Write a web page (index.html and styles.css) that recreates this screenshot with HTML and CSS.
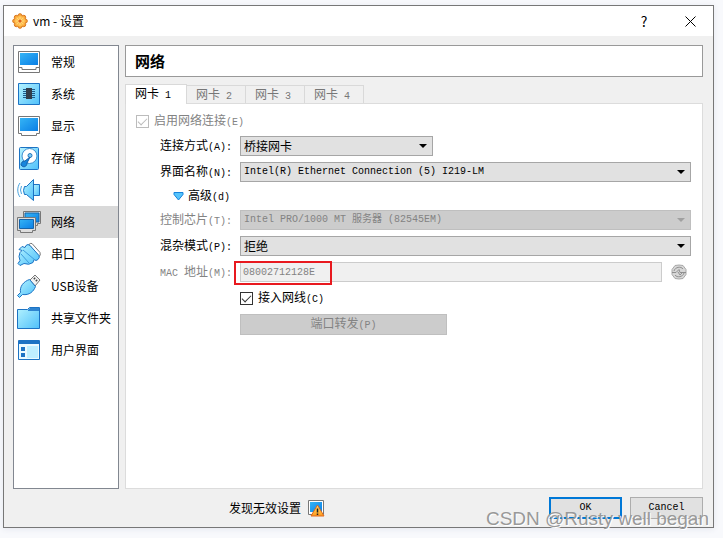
FILE: index.html
```
<!DOCTYPE html>
<html lang="zh-CN">
<head>
    <meta charset="UTF-8">
    <meta name="viewport" content="width=device-width, initial-scale=1.0">
    <title>vm - 设置</title>
    <link rel="stylesheet" href="styles.css">
</head>
<body>
    <!-- gradients shared by the icons -->
    <svg class="defs" width="0" height="0" aria-hidden="true">
        <defs>
            <linearGradient id="screen" x1="0" y1="0" x2="1" y2="1">
                <stop offset="0" stop-color="#35b4f5"/>
                <stop offset="1" stop-color="#0a7fe6"/>
            </linearGradient>
            <linearGradient id="light" x1="0" y1="0" x2="1" y2="1">
                <stop offset="0" stop-color="#b5f3ff"/>
                <stop offset="1" stop-color="#4fc0fa"/>
            </linearGradient>
            <linearGradient id="warn" x1="0" y1="0" x2="0" y2="1">
                <stop offset="0" stop-color="#ffe070"/>
                <stop offset="1" stop-color="#ff9a1c"/>
            </linearGradient>
        </defs>
    </svg>

    <div class="window">
        <header class="titlebar">
            <svg class="app-icon" width="16" height="16" viewBox="0 0 16 16">
                <g fill="#f9a63a" stroke="#d9761a">
                    <circle cx="8" cy="2.7" r="2"/><circle cx="11.7" cy="4.3" r="2"/>
                    <circle cx="13.3" cy="8" r="2"/><circle cx="11.7" cy="11.7" r="2"/>
                    <circle cx="8" cy="13.3" r="2"/><circle cx="4.3" cy="11.7" r="2"/>
                    <circle cx="2.7" cy="8" r="2"/><circle cx="4.3" cy="4.3" r="2"/>
                </g>
                <circle cx="8" cy="8" r="5.3" fill="#ffbd4f"/>
                <path d="M8 4v8M4 8h8M5.2 5.2l5.6 5.6M10.8 5.2l-5.6 5.6" stroke="#ffdb80"/>
                <circle cx="8" cy="8" r="1.6" fill="#e0601c"/>
            </svg>
            <h1>vm - 设置</h1>
            <button type="button" class="win-btn" aria-label="帮助">?</button>
            <button type="button" class="win-btn" aria-label="关闭">
                <svg width="11" height="11" viewBox="0 0 11 11"><path d="M.5.5l10 10M10.5.5l-10 10" stroke="#000" fill="none"/></svg>
            </button>
        </header>

        <div class="content">
            <nav class="sidebar">
                <a href="#general">
                    <svg width="24" height="24" viewBox="0 0 24 24"><path d="M1.5 1.5h21v21h-21z" fill="#fff" stroke="#777"/><path d="M3 3h18v12H3z" fill="url(#screen)"/><path d="M2 17.5h3v2h14v-2h3" fill="none" stroke="#777"/></svg>
                    常规
                </a>
                <a href="#system">
                    <svg width="24" height="24" viewBox="0 0 24 24"><path d="M1.5 1.5h21v21h-21z" fill="url(#light)" stroke="#1c73c4"/><path d="M6 7.5h12M6 9.5h12M6 11.5h12M6 13.5h12M6 15.5h12" stroke="#1f5c8c"/><path d="M9 6h6v11H9z" fill="#333d4a"/></svg>
                    系统
                </a>
                <a href="#display">
                    <svg width="24" height="24" viewBox="0 0 24 24"><path d="M1.5 2.5h21v17h-3v2h-15v-2h-3z" fill="#fff" stroke="#777"/><path d="M3 4h18v13H3z" fill="url(#screen)"/></svg>
                    显示
                </a>
                <a href="#storage">
                    <svg width="24" height="24" viewBox="0 0 24 24"><rect x="2.5" y="1.5" width="19" height="22" rx="1" fill="url(#light)" stroke="#1c73c4"/><circle cx="12.5" cy="10" r="7.5" fill="#fff" stroke="#3c8fd0"/><circle cx="13" cy="9.5" r="2" fill="#7ccdf5" stroke="#2476bd"/><path d="M13 11l-5 4c-3 0-4 2-4 4 2 3 6 2 6-2z" fill="#1786dd" stroke="#125faa"/></svg>
                    存储
                </a>
                <a href="#audio">
                    <svg width="24" height="24" viewBox="0 0 24 24"><path d="M16.5 6.500h6v11h-6z" fill="url(#light)" stroke="#1c73c4"/><path d="M7.500 8.500h2l7-7v21l-7-6h-2q-2-4 0-8z" fill="url(#light)" stroke="#1c73c4"/><path d="M4.500 8q-2 4 0 8M3 5c-3 4-3 10 0 14" fill="none" stroke="#48a3df"/></svg>
                    声音
                </a>
                <a href="#network" class="selected">
                    <svg width="24" height="24" viewBox="0 0 24 24"><path d="M6.500 1.500h17v12h-3v2h-11v-2h-3z" fill="#ddd" stroke="#777"/><path d="M8 3h14v9H8z" fill="url(#screen)" stroke="#1764a8"/><path d="M.5 7.500h18v13h-3v2h-12v-2h-3z" fill="#ddd" stroke="#777"/><path d="M2.500 9.500h14v9h-14z" fill="url(#screen)" stroke="#1764a8"/></svg>
                    网络
                </a>
                <a href="#serial">
                    <svg width="24" height="24" viewBox="0 0 24 24"><path d="M12 2.500q1-1.500 3-1l8 9q1 3-1 4z" fill="#fff" stroke="#777"/><path d="M9 3.500q2-2 4 0l9 10q1 2-1 4l-2 1-2-1-1 3q-4 3-9 1l-4 2-2-2 2-3q-2-4 0-8l2-2-3-1 3-3 3 1z" fill="url(#light)" stroke="#1c73c4"/><path d="M6 8l12 10M4 12l8 9" stroke="#3c9bdd" fill="none"/></svg>
                    串口
                </a>
                <a href="#usb">
                    <svg width="24" height="24" viewBox="0 0 24 24"><path d="M13 6l5-5 5 5-5 6z" fill="#f2f2f2" stroke="#777"/><path d="M17 4l1 1M19 6l1 1" stroke="#444" stroke-width="2"/><path d="M12.500 5.500l6 7c-2 5-6 9-13 8l-3 3-2-2 3-3c-1-6 3-11 9-13z" fill="url(#light)" stroke="#1c73c4"/></svg>
                    USB设备
                </a>
                <a href="#shared">
                    <svg width="24" height="24" viewBox="0 0 24 24"><path d="M.5 22.500v-19h10l2-2h10v21z" fill="url(#light)" stroke="#1c73c4"/><path d="M11 4l2-2h9v3H11z" fill="#2f84d0"/></svg>
                    共享文件夹
                </a>
                <a href="#ui">
                    <svg width="24" height="24" viewBox="0 0 24 24"><path d="M1.500 2.500h21v19h-21z" fill="#eafaff" stroke="#1c73c4"/><path d="M2 3h20v3H2z" fill="#1c73c4"/><path d="M4 9h4v4H4zM4 15h4v4H4z" fill="#1c73c4"/><path d="M10 8h11v12H10z" fill="#bfefff"/></svg>
                    用户界面
                </a>
            </nav>

            <main>
                <h2>网络</h2>
                <div class="tabs" role="tablist">
                    <button type="button" role="tab" class="active" aria-selected="true">网卡<span class="en"> 1</span></button>
                    <button type="button" role="tab">网卡<span class="en"> 2</span></button>
                    <button type="button" role="tab">网卡<span class="en"> 3</span></button>
                    <button type="button" role="tab">网卡<span class="en"> 4</span></button>
                </div>
                <form class="panel" id="settings">
                    <label class="check disabled">
                        <input type="checkbox" checked disabled>
                        <span>启用网络连接<span class="en">(E)</span></span>
                    </label>

                    <div class="fields">
                        <label for="attached">连接方式<span class="en">(A):</span></label>
                        <div class="select short">
                            <select id="attached"><option>桥接网卡</option></select>
                        </div>

                        <label for="adapter">界面名称<span class="en">(N):</span></label>
                        <div class="select">
                            <select id="adapter" class="en"><option>Intel(R) Ethernet Connection (5) I219-LM</option></select>
                        </div>

                        <button type="button" class="advanced">
                            <svg width="11" height="9" viewBox="0 0 11 9"><path d="M1 .5h9v2l-4.500 5.500-4.500-5.500z" fill="#56c4fb" stroke="#1583dc"/></svg>
                            <span>高级<span class="en">(d)</span></span>
                        </button>

                        <label for="chip" class="disabled">控制芯片<span class="en">(T):</span></label>
                        <div class="select disabled">
                            <select id="chip" class="en" disabled><option>Intel PRO/1000 MT 服务器 (82545EM)</option></select>
                        </div>

                        <label for="promisc">混杂模式<span class="en">(P):</span></label>
                        <div class="select">
                            <select id="promisc"><option>拒绝</option></select>
                        </div>

                        <label for="mac" class="disabled"><span class="en">MAC </span>地址<span class="en">(M):</span></label>
                        <div class="mac">
                            <input type="text" id="mac" class="en" value="08002712128E" disabled>
                            <button type="button" aria-label="刷新" disabled>
                                <svg width="16" height="16" viewBox="0 0 16 16"><path d="M4 1.500q4-1 8 0l3 4v5l-3 4q-4 1-8 0l-3-4v-5z" fill="#d6d6d6" stroke="#a8a8a8"/><path d="M3 7c1-4 7-5 9-2M13 9c-1 4-7 5-9 2" fill="none" stroke="#8f8f8f"/><path d="M1 8.500h4l3-3 1 3h6M7 8l2 3 2-2" fill="none" stroke="#8f8f8f"/></svg>
                            </button>
                        </div>

                        <label class="check cable">
                            <input type="checkbox" checked>
                            <span>接入网线<span class="en">(C)</span></span>
                        </label>

                        <button type="button" class="forward" disabled>端口转发<span class="en">(P)</span></button>
                    </div>
                </form>
            </main>
        </div>

        <footer>
            <div class="status">
                发现无效设置
                <svg width="17" height="17" viewBox="0 0 17 17"><path d="M.5.5h15v14H.5z" fill="#fff" stroke="#777"/><path d="M2 2h12v10H2z" fill="url(#screen)"/><path d="M9.500 5l6.500 11H3z" fill="url(#warn)" stroke="#e0681a"/><path d="M9.500 8.500v4M9.500 13.500v1.500" stroke="#222" stroke-width="1.500"/></svg>
            </div>
            <button type="submit" form="settings" class="btn primary en">OK</button>
            <button type="button" class="btn en">Cancel</button>
        </footer>
        <div class="watermark">CSDN @Rusty well began</div>
    </div>
</body>
</html>
```
FILE: styles.css
```
*, *::before, *::after {
    box-sizing: border-box;
}
body {
    display: flex;
    min-height: 100vh;
    margin: 0;
    padding: 5px 9px 10px 3px;
    background-color: #f8f9fc;
    color: #000;
    font-family: "Noto Sans CJK SC", sans-serif;
    font-size: 12px;
    line-height: 16px;
}
.defs {
    position: absolute;
}
svg {
    flex: none;
}
button, input, select {
    margin: 0;
    padding: 0;
    font: inherit;
    color: inherit;
}
/* narrow latin characters next to the chinese labels */
.en {
    font-family: "Liberation Mono", "Noto Sans CJK SC", monospace;
    font-size: 10px;
    white-space: pre;
}

.window {
    position: relative;
    flex: 1;
    display: flex;
    flex-direction: column;
    border: 1px solid #777;
    background-color: #f0f0f0;
    box-shadow: 0 1px 6px #e4e6ee;
}
.titlebar {
    display: flex;
    align-items: center;
    height: 30px;
    padding-left: 8px;
    background-color: #fff;
}
h1 {
    flex: 1;
    margin: 0 0 0 5px;
    font-size: 12px;
    font-weight: normal;
}
.win-btn {
    width: 46px;
    height: 30px;
    border: none;
    background: none;
    font-size: 14px;
}

.content {
    flex: 1;
    display: flex;
    gap: 6px;
    padding: 9px 10px 0 9px;
}
.sidebar {
    width: 106px;
    border: 1px solid #828790;
    background-color: #fff;
}
.sidebar a {
    display: flex;
    align-items: center;
    gap: 10px;
    height: 32px;
    padding-left: 3px;
    color: #000;
    text-decoration: none;
    white-space: nowrap;
}
.sidebar a.selected {
    background-color: #d9d9d9;
}

main {
    flex: 1;
    display: flex;
    flex-direction: column;
}
h2 {
    height: 32px;
    margin: 0 0 7px;
    padding-left: 9px;
    border: 1px solid #999;
    background-color: #fff;
    font-size: 15px;
    line-height: 30px;
}
.tabs {
    display: flex;
    align-items: flex-end;
    height: 20px;
    margin-bottom: -1px;
}
.tabs button {
    width: 59px;
    height: 18px;
    margin-bottom: 1px;
    padding-left: 9px;
    border: 1px solid #d9d9d9;
    border-width: 1px 1px 0 0;
    background-color: #f0f0f0;
    color: #777;
    text-align: left;
}
.tabs button.active {
    width: 62px;
    height: 20px;
    margin-bottom: 0;
    border-left-width: 1px;
    background-color: #fff;
    color: #000;
    z-index: 1;
}
.panel {
    flex: 1;
    padding: 8px 11px 8px 10px;
    border: 1px solid #dcdcdc;
    background-color: #fff;
}
.disabled {
    color: #838383;
}

.check {
    display: flex;
    align-items: center;
    gap: 5px;
    height: 18px;
}
.check input {
    appearance: none;
    width: 13px;
    height: 13px;
    border: 1px solid #333;
    background-color: #fff;
}
/* the tick */
.check input:checked::after {
    content: "";
    display: block;
    width: 9px;
    height: 5px;
    margin: 2px 0 0 1px;
    border: solid #333;
    border-width: 0 0 1px 1px;
    transform: rotate(-45deg);
}
.check input:disabled, .check input:disabled::after {
    border-color: #bcbcbc;
}

.fields {
    display: grid;
    grid-template-columns: 96px 1fr;
    gap: 6px 8px;
    align-items: center;
    margin-top: 6px;
}
.fields > label:not(.check) {
    text-align: right;
    white-space: nowrap;
}
.select {
    position: relative;
}
.select.short {
    width: 193px;
}
.select select {
    appearance: none;
    display: block;
    width: 100%;
    height: 20px;
    padding: 0 20px 0 3px;
    border: 1px solid #a6a6a6;
    border-radius: 0;
    background-color: #e1e1e1;
    color: #000;
    opacity: 1;
}
.select select:disabled {
    border-color: #bfbfbf;
    background-color: #ccc;
    color: #838383;
}
.select::after {
    content: "";
    position: absolute;
    top: 8px;
    right: 6px;
    border: solid transparent;
    border-width: 4px 4px 0;
    border-top-color: #000;
    pointer-events: none;
}
.select.disabled::after {
    border-top-color: #a0a0a0;
}
.advanced {
    grid-column: 1 / -1;
    justify-self: start;
    display: flex;
    align-items: center;
    gap: 4px;
    height: 16px;
    margin-left: 37px;
    border: none;
    background: none;
}
.mac {
    position: relative;
    display: flex;
    align-items: center;
    gap: 9px;
    padding-right: 4px;
}
.mac input {
    flex: 1;
    min-width: 0;
    height: 20px;
    padding-left: 2px;
    border: 1px solid #ccc;
    background-color: #f0f0f0;
    color: #838383;
}
.mac button {
    display: flex;
    border: none;
    background: none;
}
/* red marker around the address */
.mac::before {
    content: "";
    position: absolute;
    top: -1px;
    left: -6px;
    width: 98px;
    height: 24px;
    border: 2px solid #e8191f;
}
.check.cable {
    grid-column: 2;
    height: 20px;
    justify-self: start;
}
.forward {
    grid-column: 2;
    justify-self: start;
    width: 207px;
    height: 21px;
    border: 1px solid #bfbfbf;
    background-color: #ccc;
    color: #838383;
}

footer {
    display: flex;
    align-items: center;
    gap: 8px;
    height: 38px;
    padding: 0 10px 0 9px;
}
.status {
    flex: 1;
    display: flex;
    align-items: center;
    justify-content: center;
    gap: 7px;
}
.btn {
    width: 73px;
    height: 22px;
    border: 1px solid #adadad;
    background-color: #e1e1e1;
}
.btn.primary {
    border: 2px solid #0078d7;
}
.watermark {
    position: absolute;
    right: 4px;
    bottom: -3px;
    color: #999;
    font-family: "Liberation Sans", sans-serif;
    font-size: 19px;
    line-height: 22px;
    text-shadow: 1px 1px #fff;
    pointer-events: none;
}
```
